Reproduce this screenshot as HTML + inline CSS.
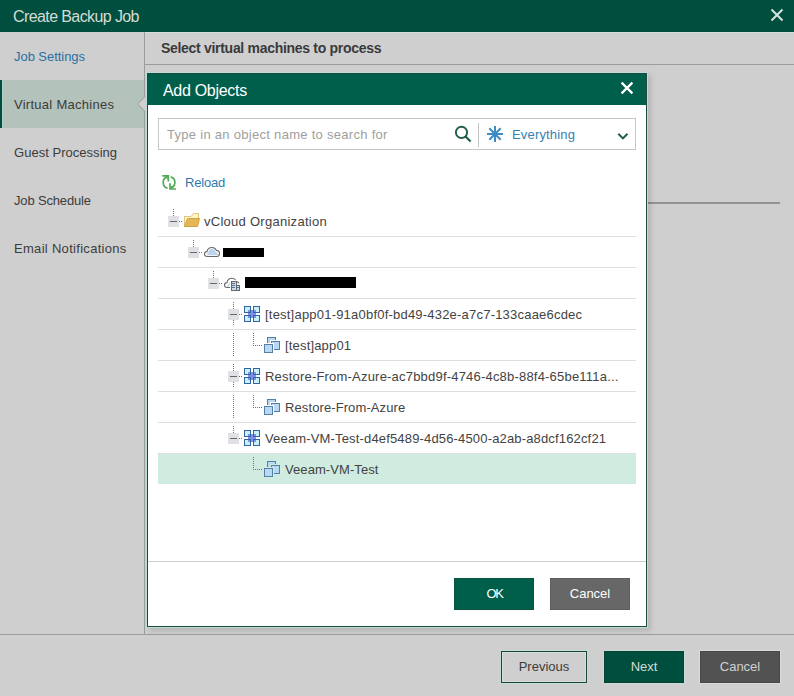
<!DOCTYPE html>
<html><head><meta charset="utf-8">
<style>
*{box-sizing:border-box;margin:0;padding:0}
html,body{width:794px;height:696px;overflow:hidden;background:#cfcfcf;font-family:"Liberation Sans",sans-serif;}
.abs{position:absolute}
.t{position:absolute;white-space:nowrap;line-height:1}
#titlebar{left:0;top:0;width:794px;height:32px;background:#004e3d}
#title{left:13px;top:9px;font-size:16px;color:#d3dcd8;letter-spacing:-0.6px}
#nav{left:0;top:32px;width:144px;height:602px;background:#cfcfcf}
#navline{left:144px;top:32px;width:1px;height:602px;background:#9c9c9c}
.navitem{position:absolute;left:0;width:144px;height:48px}
.navtxt{position:absolute;left:14px;font-size:13px;color:#3c3c3c;white-space:nowrap;line-height:1}
#selband{left:0;top:80px;width:144px;height:48px;background:#b3c2ba}
#selbar{left:0;top:80px;width:2px;height:48px;background:#004e3d}
#hdrline{left:145px;top:64px;width:649px;height:1px;background:#9c9c9c}
#hdrtxt{left:161px;top:41px;font-size:14px;font-weight:bold;color:#3a3a3a;letter-spacing:-0.3px}
#rline{left:646px;top:202px;width:134px;height:2px;background:#929292}
#footline{left:0;top:634px;width:794px;height:1px;background:#9c9c9c}
.btn{position:absolute;height:32px;font-size:13px;line-height:32px;text-align:center;white-space:nowrap}
/* modal */
#modal{left:147px;top:73px;width:500px;height:554px;background:#fff;border:1px solid #1d4a40;box-shadow:0 0 0 1px #bcdcd4,3px 3px 5px 1px rgba(0,0,0,0.13)}
#mhdr{left:0;top:0;width:498px;height:31px;background:#005f4b}
#mtitle{left:15px;top:9px;font-size:16px;color:#fff;letter-spacing:-0.3px}
.tree{font-size:13px;color:#434343}
</style></head><body>
<div id="titlebar" class="abs"></div>
<div class="abs" style="left:0;top:32px;width:794px;height:1px;background:#d4dfdb"></div>
<div id="title" class="t">Create Backup Job</div>
<svg class="abs" style="left:770px;top:8px" width="14" height="14" viewBox="0 0 14 14"><path d="M1.5 1.5L12.5 12.5M12.5 1.5L1.5 12.5" stroke="#d3e3dd" stroke-width="2"/></svg>

<div id="nav" class="abs"></div>
<div id="selband" class="abs"></div>
<div id="selbar" class="abs"></div>
<div class="abs" style="left:2px;top:80px;width:1px;height:48px;background:#b6d0c8"></div>
<div class="navtxt" style="top:50px;color:#2a70a2;letter-spacing:-0.05px">Job Settings</div>
<div class="navtxt" style="top:98px;letter-spacing:0.27px">Virtual Machines</div>
<div class="navtxt" style="top:146px;letter-spacing:0.03px">Guest Processing</div>
<div class="navtxt" style="top:194px;letter-spacing:-0.16px">Job Schedule</div>
<div class="navtxt" style="top:242px;letter-spacing:0.3px">Email Notifications</div>
<div id="navline" class="abs"></div>
<svg class="abs" style="left:137px;top:96px" width="9" height="16" viewBox="0 0 9 16"><path d="M8 0L8 0.5L0.8 8L8 15.5L8 16L9 16L9 0Z" fill="#cfcfcf"/><path d="M7.5 0.5L7.5 1L0.7 8L7.5 15L7.5 15.5" stroke="#9c9c9c" stroke-width="1" fill="none"/></svg>

<div id="hdrtxt" class="t">Select virtual machines to process</div>
<div id="hdrline" class="abs"></div>
<div id="rline" class="abs"></div>
<div id="footline" class="abs"></div>

<div class="btn" style="left:501px;top:651px;width:86px;border:1px solid #16453a;color:#3c3c3c;line-height:30px;box-shadow:0 0 0 1px #c6dcd6,inset 0 0 0 1px #d9dddc">Previous</div>
<div class="btn" style="left:604px;top:651px;width:80px;background:#004e3d;color:#d3dcd8;border:1px solid #073f31;line-height:30px;box-shadow:0 0 0 1px #c8ddd7">Next</div>
<div class="btn" style="left:700px;top:651px;width:80px;background:#525252;color:#d0d0d0;border:1px solid #474747;line-height:30px;box-shadow:0 0 0 1px #dadada">Cancel</div>

<div id="modal" class="abs">
  <div id="mhdr" class="abs"></div>
  <div id="mtitle" class="t">Add Objects</div>
</div>
<svg class="abs" style="left:619px;top:80px" width="16" height="16" viewBox="0 0 16 16"><path d="M2.6 2.6L13.4 13.4M13.4 2.6L2.6 13.4" stroke="#fff" stroke-width="2.3"/></svg>
<div id="search" class="abs" style="left:158px;top:118px;width:478px;height:32px;border:1px solid #c6c6c6"></div>
<div class="t" id="ph" style="left:167px;top:128px;font-size:13px;color:#a0a0a0;letter-spacing:0.29px">Type in an object name to search for</div>
<svg class="abs" style="left:450px;top:122px" width="26" height="24" viewBox="450 122 26 24"><circle cx="461.5" cy="132.4" r="5.6" stroke="#1f5e45" stroke-width="1.9" fill="none"/><path d="M465.3 136.2L470.6 141.5" stroke="#1f5e45" stroke-width="2.2"/></svg>
<div class="abs" style="left:478px;top:123px;width:1px;height:24px;background:#c4c4c4"></div>
<svg class="abs" style="left:484px;top:123px" width="22" height="22" viewBox="484 123 22 22"><g stroke="#3d8dc4" stroke-width="2"><path d="M495 126V142M487 134H503M489.3 128.3L500.7 139.7M500.7 128.3L489.3 139.7"/></g></svg>
<div class="t" id="every" style="left:512px;top:128px;font-size:13px;color:#3381b4;letter-spacing:0.17px">Everything</div>
<svg class="abs" style="left:614px;top:128px" width="18" height="14" viewBox="614 128 18 14"><path d="M618.3 133.8L622.9 138.4L627.5 133.8" stroke="#1f5e45" stroke-width="2" fill="none"/></svg>

<svg class="abs" style="left:158px;top:171px" width="22" height="22" viewBox="158 171 22 22"><g fill="none" stroke="#55aa55" stroke-width="1.7"><path d="M167.65 188.2A6 6 0 0 1 167.65 176.6"/><path d="M170.7 176.9A5.7 5.7 0 0 1 170.2 188"/><path d="M162.3 175.9H168.3V181.6" stroke-linejoin="miter"/><path d="M170 183.3V189H176" stroke-linejoin="miter"/></g><path d="M165 176.7L167.5 176.7L167.4 179.5Z M170.9 188.2L170.9 185.5L173.6 188.2Z" fill="#55aa55"/></svg>
<div class="t" id="reload" style="left:185px;top:176px;font-size:13px;color:#2f7bb0;letter-spacing:-0.18px">Reload</div>

<svg class="abs" style="left:0;top:0" width="794" height="696" viewBox="0 0 794 696">
<rect x="158" y="236" width="478" height="1" fill="#dedede"/>
<rect x="158" y="267" width="478" height="1" fill="#dedede"/>
<rect x="158" y="298" width="478" height="1" fill="#dedede"/>
<rect x="158" y="329" width="478" height="1" fill="#dedede"/>
<rect x="158" y="360" width="478" height="1" fill="#dedede"/>
<rect x="158" y="391" width="478" height="1" fill="#dedede"/>
<rect x="158" y="422" width="478" height="1" fill="#dedede"/>
<rect x="158" y="453" width="478" height="1" fill="#dedede"/>
<rect x="158" y="454" width="478" height="30" fill="#d0ebe0"/>
<g fill="#707070"><rect x="173" y="209" width="1" height="1"/><rect x="173" y="211" width="1" height="1"/><rect x="173" y="213" width="1" height="1"/><rect x="173" y="215" width="1" height="1"/><rect x="179" y="221" width="1" height="1"/><rect x="181" y="221" width="1" height="1"/><rect x="193" y="240" width="1" height="1"/><rect x="193" y="242" width="1" height="1"/><rect x="193" y="244" width="1" height="1"/><rect x="193" y="246" width="1" height="1"/><rect x="199" y="252" width="1" height="1"/><rect x="201" y="252" width="1" height="1"/><rect x="213" y="271" width="1" height="1"/><rect x="213" y="273" width="1" height="1"/><rect x="213" y="275" width="1" height="1"/><rect x="213" y="277" width="1" height="1"/><rect x="219" y="283" width="1" height="1"/><rect x="221" y="283" width="1" height="1"/><rect x="233" y="302" width="1" height="1"/><rect x="233" y="304" width="1" height="1"/><rect x="233" y="306" width="1" height="1"/><rect x="233" y="308" width="1" height="1"/><rect x="233" y="320" width="1" height="1"/><rect x="233" y="322" width="1" height="1"/><rect x="233" y="324" width="1" height="1"/><rect x="239" y="314" width="1" height="1"/><rect x="241" y="314" width="1" height="1"/><rect x="233" y="364" width="1" height="1"/><rect x="233" y="366" width="1" height="1"/><rect x="233" y="368" width="1" height="1"/><rect x="233" y="370" width="1" height="1"/><rect x="233" y="382" width="1" height="1"/><rect x="233" y="384" width="1" height="1"/><rect x="233" y="386" width="1" height="1"/><rect x="239" y="376" width="1" height="1"/><rect x="241" y="376" width="1" height="1"/><rect x="233" y="426" width="1" height="1"/><rect x="233" y="428" width="1" height="1"/><rect x="233" y="430" width="1" height="1"/><rect x="233" y="432" width="1" height="1"/><rect x="239" y="438" width="1" height="1"/><rect x="241" y="438" width="1" height="1"/><rect x="233" y="333" width="1" height="1"/><rect x="233" y="335" width="1" height="1"/><rect x="233" y="337" width="1" height="1"/><rect x="233" y="339" width="1" height="1"/><rect x="233" y="341" width="1" height="1"/><rect x="233" y="343" width="1" height="1"/><rect x="233" y="345" width="1" height="1"/><rect x="233" y="347" width="1" height="1"/><rect x="233" y="349" width="1" height="1"/><rect x="233" y="351" width="1" height="1"/><rect x="233" y="353" width="1" height="1"/><rect x="233" y="355" width="1" height="1"/><rect x="253" y="333" width="1" height="1"/><rect x="253" y="335" width="1" height="1"/><rect x="253" y="337" width="1" height="1"/><rect x="253" y="339" width="1" height="1"/><rect x="253" y="341" width="1" height="1"/><rect x="253" y="343" width="1" height="1"/><rect x="253" y="345" width="1" height="1"/><rect x="255" y="345" width="1" height="1"/><rect x="257" y="345" width="1" height="1"/><rect x="259" y="345" width="1" height="1"/><rect x="261" y="345" width="1" height="1"/><rect x="233" y="395" width="1" height="1"/><rect x="233" y="397" width="1" height="1"/><rect x="233" y="399" width="1" height="1"/><rect x="233" y="401" width="1" height="1"/><rect x="233" y="403" width="1" height="1"/><rect x="233" y="405" width="1" height="1"/><rect x="233" y="407" width="1" height="1"/><rect x="233" y="409" width="1" height="1"/><rect x="233" y="411" width="1" height="1"/><rect x="233" y="413" width="1" height="1"/><rect x="233" y="415" width="1" height="1"/><rect x="233" y="417" width="1" height="1"/><rect x="253" y="395" width="1" height="1"/><rect x="253" y="397" width="1" height="1"/><rect x="253" y="399" width="1" height="1"/><rect x="253" y="401" width="1" height="1"/><rect x="253" y="403" width="1" height="1"/><rect x="253" y="405" width="1" height="1"/><rect x="253" y="407" width="1" height="1"/><rect x="255" y="407" width="1" height="1"/><rect x="257" y="407" width="1" height="1"/><rect x="259" y="407" width="1" height="1"/><rect x="261" y="407" width="1" height="1"/><rect x="253" y="457" width="1" height="1"/><rect x="253" y="459" width="1" height="1"/><rect x="253" y="461" width="1" height="1"/><rect x="253" y="463" width="1" height="1"/><rect x="253" y="465" width="1" height="1"/><rect x="253" y="467" width="1" height="1"/><rect x="253" y="469" width="1" height="1"/><rect x="255" y="469" width="1" height="1"/><rect x="257" y="469" width="1" height="1"/><rect x="259" y="469" width="1" height="1"/><rect x="261" y="469" width="1" height="1"/></g>
<rect x="168" y="216" width="11" height="11" fill="#dfe1e5"/><rect x="170" y="221" width="7" height="1" fill="#666666"/>
<rect x="188" y="247" width="11" height="11" fill="#dfe1e5"/><rect x="190" y="252" width="7" height="1" fill="#666666"/>
<rect x="208" y="278" width="11" height="11" fill="#dfe1e5"/><rect x="210" y="283" width="7" height="1" fill="#666666"/>
<rect x="228" y="309" width="11" height="11" fill="#dfe1e5"/><rect x="230" y="314" width="7" height="1" fill="#666666"/>
<rect x="228" y="371" width="11" height="11" fill="#dfe1e5"/><rect x="230" y="376" width="7" height="1" fill="#666666"/>
<rect x="228" y="433" width="11" height="11" fill="#dfe1e5"/><rect x="230" y="438" width="7" height="1" fill="#666666"/>
<!-- folder -->
<g transform="translate(184,213)"><path d="M0.5 13.5V3.5H7.5L9.5 0.5H14.5V5.5" fill="#fff4c2" stroke="#c0984c" stroke-width="1"/><path d="M0.5 13.5V3.5H7.5L9.5 0.5H14.5V5.5H3Z" fill="#fff4c2"/><path d="M3.5 5.5H15.5L13.5 13.5H0.5Z" fill="#e5b556" stroke="#d0a244" stroke-width="1"/></g>
<!-- cloud -->
<g transform="translate(204,247)"><path d="M3.2 9.5C1.5 9.5 0.5 8.5 0.5 7C0.5 5.6 1.6 4.6 3 4.6C3.4 2.2 5.3 0.5 8 0.5C10.3 0.5 11.7 1.8 12.4 3.4C14.3 3.4 15.5 4.8 15.5 6.5C15.5 8.3 14.3 9.5 12.8 9.5Z" fill="#ffffff" stroke="#6a6a6a" stroke-width="1.1"/><path d="M2.5 8.2L4.3 5.5C4.6 3.2 6 1.8 8 1.8C9.8 1.8 11 3 11.6 4.6L14 6.8L14.3 8.2Z" fill="#bcd4ec"/></g>
<!-- cloud + building -->
<g transform="translate(224,278)"><path d="M6.2 9.5H3C1.5 9.5 0.5 8.5 0.5 7C0.5 5.6 1.6 4.6 3 4.6C3.4 2.2 5.3 0.3 8 0.3C9.6 0.3 10.8 1 11.6 1.8M12.8 3.4C13.8 3.8 14.6 4.4 15 5.2" fill="none" stroke="#6a6a6a" stroke-width="1.1"/><path d="M2.8 8.6L5.8 4.2V8.6Z" fill="#c4d8ee"/><rect x="7.5" y="3.5" width="5" height="9" fill="#c9dcf0" stroke="#686868"/><rect x="12.5" y="7.5" width="3" height="5" fill="#c9dcf0" stroke="#686868"/><g fill="#56728f"><rect x="8" y="5" width="3" height="1"/><rect x="8" y="7" width="3" height="1"/><rect x="8" y="9" width="3" height="1"/><rect x="13" y="9" width="2" height="1"/></g></g>
<rect x="223" y="248" width="41" height="9" fill="#000"/>
<rect x="245" y="277" width="111" height="11" fill="#000"/>
<!-- vApp icons -->
<defs>
<g id="vapp"><rect x="4" y="4" width="8" height="8" fill="#7e90ef"/><g fill="#c8f2fb" stroke="#3363a0" stroke-width="1"><rect x="0.5" y="0.5" width="6" height="6"/><rect x="9.5" y="0.5" width="6" height="6"/><rect x="0.5" y="9.5" width="6" height="6"/><rect x="9.5" y="9.5" width="6" height="6"/></g><g fill="#7f98d6"><rect x="4" y="4" width="2" height="2"/><rect x="10" y="4" width="2" height="2"/><rect x="4" y="10" width="2" height="2"/><rect x="10" y="10" width="2" height="2"/></g></g>
<g id="vm"><rect x="3.5" y="0.5" width="8" height="8" fill="#b9d8f2" stroke="#5380a8"/><rect x="6" y="3" width="11" height="11" fill="#fff"/><rect x="7.5" y="4.5" width="8" height="8" fill="#b9d8f2" stroke="#5380a8"/><rect x="-1" y="6" width="11" height="11" fill="#fff"/><rect x="0.5" y="7.5" width="8" height="8" fill="#b9d8f2" stroke="#5380a8"/></g>
<g id="vmsel"><rect x="3.5" y="0.5" width="8" height="8" fill="#b9d8f2" stroke="#5380a8"/><rect x="6" y="3" width="11" height="11" fill="#d0ebe0"/><rect x="7.5" y="4.5" width="8" height="8" fill="#b9d8f2" stroke="#5380a8"/><rect x="-1" y="6" width="11" height="11" fill="#d0ebe0"/><rect x="0.5" y="7.5" width="8" height="8" fill="#b9d8f2" stroke="#5380a8"/></g>
</defs>
<use href="#vapp" x="244" y="306"/>
<use href="#vapp" x="244" y="368"/>
<use href="#vapp" x="244" y="430"/>
<use href="#vm" x="264" y="337"/>
<use href="#vm" x="264" y="399"/>
<use href="#vmsel" x="264" y="461"/>
</svg>
<div class="t tree" style="left:204px;top:215px;letter-spacing:0.27px">vCloud Organization</div>
<div class="t tree" style="left:265px;top:308px;letter-spacing:0.21px">[test]app01-91a0bf0f-bd49-432e-a7c7-133caae6cdec</div>
<div class="t tree" style="left:285px;top:339px;letter-spacing:0.17px">[test]app01</div>
<div class="t tree" style="left:265px;top:370px;letter-spacing:0.2px">Restore-From-Azure-ac7bbd9f-4746-4c8b-88f4-65be111a...</div>
<div class="t tree" style="left:285px;top:401px;letter-spacing:0.1px">Restore-From-Azure</div>
<div class="t tree" style="left:265px;top:432px;letter-spacing:0.16px">Veeam-VM-Test-d4ef5489-4d56-4500-a2ab-a8dcf162cf21</div>
<div class="t tree" style="left:285px;top:463px;letter-spacing:0.08px">Veeam-VM-Test</div>

<div class="abs" style="left:148px;top:561px;width:498px;height:1px;background:#cfcfcf"></div>
<div class="btn" style="left:454px;top:578px;width:80px;background:#005f4b;color:#fff;border:1px solid #0b5241;line-height:30px;letter-spacing:-1.2px;text-indent:1.2px">OK</div>
<div class="btn" style="left:550px;top:578px;width:80px;background:#676767;color:#fff;border:1px solid #5e5e5e;line-height:30px">Cancel</div>

</body></html>
